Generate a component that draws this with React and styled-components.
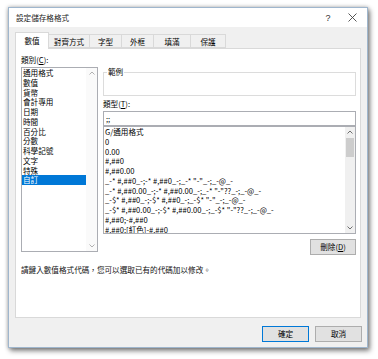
import styled, { createGlobalStyle } from "styled-components";

const GlobalStyle = createGlobalStyle`
  html, body {
    margin: 0;
    padding: 0;
    background: #fff;
  }
  body {
    font-family: "Noto Sans CJK TC", "Noto Sans", sans-serif;
    font-size: 7.6px;
    color: #000;
  }
`;

const Page = styled.div`
  width: 378px;
  height: 359px;
  box-sizing: border-box;
  padding: 7px 0 0 8px;
`;

const Window = styled.div`
  width: 360px;
  height: 341px;
  box-sizing: border-box;
  border: 1px solid #9fb6cd;
  background: #f0f0f0;
  box-shadow: 0 0 4px rgba(0, 0, 0, 0.3), 2px 3px 5px rgba(0, 0, 0, 0.45);
  display: flex;
  flex-direction: column;
`;

const TitleBar = styled.div`
  height: 19px;
  flex-shrink: 0;
  background: #fff;
  display: flex;
  align-items: center;
  padding: 0 3px 0 7px;
`;

const Title = styled.span`
  line-height: 10px;
  color: #222;
`;

const TitleButton = styled.div`
  width: 24px;
  height: 19px;
  display: flex;
  align-items: center;
  justify-content: center;
  color: #333;
  font-family: "Liberation Sans", sans-serif;
  font-size: 9px;
  &:first-of-type {
    margin-left: auto;
  }
`;

const Body = styled.div`
  flex: 1;
  display: flex;
  flex-direction: column;
  padding: 5px 6px 5px 6px;
`;

const TabStrip = styled.div`
  display: flex;
  align-items: flex-end;
  height: 16px;
  position: relative;
  z-index: 1;
`;

const Tab = styled.div`
  width: ${(p) => p.$w}px;
  height: ${(p) => (p.$active ? 17 : 14)}px;
  margin-bottom: ${(p) => (p.$active ? -1 : 0)}px;
  margin-left: -1px;
  box-sizing: border-box;
  border: 1px solid #d9d9d9;
  border-bottom: ${(p) => (p.$active ? "none" : "1px solid #d9d9d9")};
  background: ${(p) => (p.$active ? "#fff" : "#f0f0f0")};
  display: flex;
  align-items: center;
  justify-content: center;
  padding-bottom: ${(p) => (p.$active ? 1 : 0)}px;
  &:first-child {
    margin-left: 0;
  }
`;

const Panel = styled.div`
  height: 270px;
  box-sizing: border-box;
  background: #fff;
  border: 1px solid #d9d9d9;
  padding: 6px 4px 0 5px;
`;

const Columns = styled.div`
  display: flex;
  gap: 5px;
`;

const LeftCol = styled.div`
  width: 77px;
  display: flex;
  flex-direction: column;
`;

const RightCol = styled.div`
  flex: 1;
  display: flex;
  flex-direction: column;
  padding-top: 12px;
`;

const FieldLabel = styled.div`
  line-height: 10px;
  height: 10px;
  margin-bottom: 2px;
  margin-top: ${(p) => p.$top || 0}px;
`;

const ListBox = styled.div`
  height: ${(p) => p.$h}px;
  box-sizing: border-box;
  border: 1px solid #abadb3;
  display: flex;
  background: #fff;
`;

const Items = styled.div`
  flex: 1;
  overflow: hidden;
`;

const Item = styled.div`
  height: 9.75px;
  line-height: 9.75px;
  padding-left: ${(p) => p.$pad || 1}px;
  white-space: nowrap;
  background: ${(p) => (p.$selected ? "#0078d7" : "transparent")};
  color: ${(p) => (p.$selected ? "#fff" : "#000")};
`;

const ScrollBar = styled.div`
  width: ${(p) => p.$w}px;
  background: ${(p) => p.$bg};
  display: flex;
  flex-direction: column;
`;

const Arrow = styled.div`
  height: 10px;
  display: flex;
  align-items: center;
  justify-content: center;
  color: ${(p) => p.$color};
`;

const Thumb = styled.div`
  height: 19px;
  margin: 1px 1px 0;
  background: #cdcdcd;
`;

const Spacer = styled.div`
  flex: 1;
`;

const Group = styled.fieldset`
  margin: 0;
  padding: 0 3px;
  height: 29px;
  box-sizing: border-box;
  border: 1px solid #dcdcdc;
`;

const Legend = styled.legend`
  padding: 0 1px;
  line-height: 10px;
  font-size: 7.6px;
`;

const CodeInput = styled.input`
  display: block;
  height: 15px;
  box-sizing: border-box;
  margin: 0;
  border: 1px solid #abadb3;
  padding: 0 2px;
  font-family: "Noto Sans CJK TC", "Noto Sans", sans-serif;
  font-size: 7.6px;
  color: #000;
  outline: none;
`;

const ButtonRow = styled.div`
  display: flex;
  justify-content: flex-end;
  gap: 6px;
  margin-top: ${(p) => p.$top}px;
  margin-right: ${(p) => p.$right || 0}px;
`;

const Button = styled.button`
  width: ${(p) => p.$w}px;
  height: 16px;
  box-sizing: border-box;
  margin: 0;
  padding: 0;
  border: 1px solid ${(p) => (p.$default ? "#0078d7" : "#adadad")};
  background: #e1e1e1;
  font-family: "Noto Sans CJK TC", "Noto Sans", sans-serif;
  font-size: 7.6px;
  color: #000;
  line-height: 12px;
`;

const Hint = styled.div`
  margin-top: 10px;
  line-height: 10px;
  color: #111;
`;

const Chevron = ({ up }) => (
  <svg width="6" height="4" viewBox="0 0 6 4">
    <path
      d={up ? "M0.5 3.5 L3 1 L5.5 3.5" : "M0.5 0.5 L3 3 L5.5 0.5"}
      fill="none"
      stroke="currentColor"
      strokeWidth="0.9"
    />
  </svg>
);

const CloseIcon = () => (
  <svg width="9" height="9" viewBox="0 0 9 9">
    <path d="M0.5 0.5 L8.5 8.5 M8.5 0.5 L0.5 8.5" stroke="#444" strokeWidth="0.9" />
  </svg>
);

const tabs = [
  { label: "數值", w: 34 },
  { label: "對齊方式", w: 42 },
  { label: "字型", w: 33 },
  { label: "外框", w: 33 },
  { label: "填滿", w: 38 },
  { label: "保護", w: 36 },
];

const categories = [
  "通用格式",
  "數值",
  "貨幣",
  "會計專用",
  "日期",
  "時間",
  "百分比",
  "分數",
  "科學記號",
  "文字",
  "特殊",
  "自訂",
];

const formats = [
  "G/通用格式",
  "0",
  "0.00",
  "#,##0",
  "#,##0.00",
  '_-* #,##0_-;-* #,##0_-;_-* "-"_-;_-@_-',
  '_-* #,##0.00_-;-* #,##0.00_-;_-* "-"??_-;_-@_-',
  '_-$* #,##0_-;-$* #,##0_-;_-$* "-"_-;_-@_-',
  '_-$* #,##0.00_-;-$* #,##0.00_-;_-$* "-"??_-;_-@_-',
  "#,##0;-#,##0",
  "#,##0;[紅色]-#,##0",
];

export default function App() {
  return (
    <Page>
      <GlobalStyle />
      <Window>
        <TitleBar>
          <Title>設定儲存格格式</Title>
          <TitleButton>?</TitleButton>
          <TitleButton>
            <CloseIcon />
          </TitleButton>
        </TitleBar>
        <Body>
          <TabStrip>
            {tabs.map((t, i) => (
              <Tab key={t.label} $w={t.w} $active={i === 0}>
                {t.label}
              </Tab>
            ))}
          </TabStrip>
          <Panel>
            <Columns>
              <LeftCol>
                <FieldLabel>
                  類別(<u>C</u>):
                </FieldLabel>
                <ListBox $h={185}>
                  <Items>
                    {categories.map((c) => (
                      <Item key={c} $selected={c === "自訂"}>
                        {c}
                      </Item>
                    ))}
                  </Items>
                  <ScrollBar $w={11} $bg="#fafafa">
                    <Arrow $color="#a8a8a8">
                      <Chevron up />
                    </Arrow>
                    <Spacer />
                    <Arrow $color="#a8a8a8">
                      <Chevron />
                    </Arrow>
                  </ScrollBar>
                </ListBox>
              </LeftCol>
              <RightCol>
                <Group>
                  <Legend>範例</Legend>
                </Group>
                <FieldLabel $top={3}>
                  類型(<u>T</u>):
                </FieldLabel>
                <CodeInput defaultValue=";;" readOnly />
                <ListBox $h={108}>
                  <Items>
                    {formats.map((f) => (
                      <Item key={f} $pad={1}>
                        {f}
                      </Item>
                    ))}
                  </Items>
                  <ScrollBar $w={10} $bg="#f0f0f0">
                    <Arrow $color="#606060">
                      <Chevron up />
                    </Arrow>
                    <Thumb />
                    <Spacer />
                    <Arrow $color="#606060">
                      <Chevron />
                    </Arrow>
                  </ScrollBar>
                </ListBox>
                <ButtonRow $top={5}>
                  <Button $w={46}>
                    刪除(<u>D</u>)
                  </Button>
                </ButtonRow>
              </RightCol>
            </Columns>
            <Hint>請鍵入數值格式代碼，您可以選取已有的代碼加以修改。</Hint>
          </Panel>
          <ButtonRow $top={8} $right={-1}>
            <Button $w={47} $default>
              確定
            </Button>
            <Button $w={47}>取消</Button>
          </ButtonRow>
        </Body>
      </Window>
    </Page>
  );
}
